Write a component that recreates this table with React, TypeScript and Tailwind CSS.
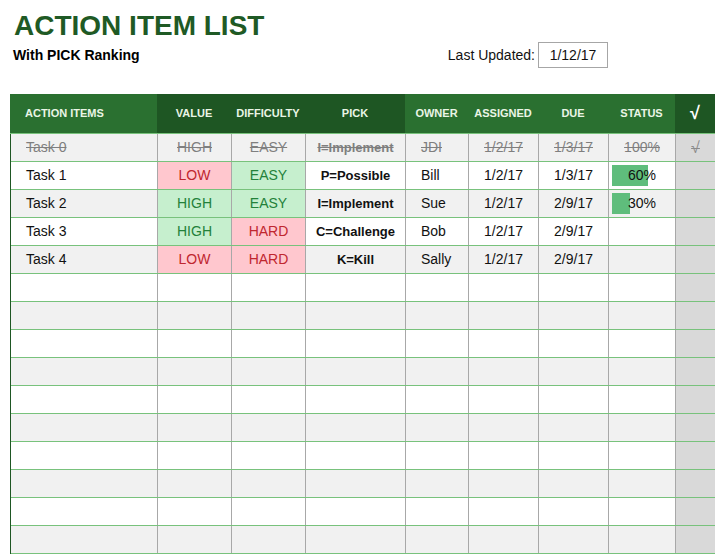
import React from 'react';

type Row = {
  task: string;
  value: string;
  diff: string;
  pick: string;
  owner: string;
  assigned: string;
  due: string;
  status?: number;
  done?: boolean;
};

const rows: Row[] = [
  { task: 'Task 0', value: 'HIGH', diff: 'EASY', pick: 'I=Implement', owner: 'JDI', assigned: '1/2/17', due: '1/3/17', status: 100, done: true },
  { task: 'Task 1', value: 'LOW', diff: 'EASY', pick: 'P=Possible', owner: 'Bill', assigned: '1/2/17', due: '1/3/17', status: 60 },
  { task: 'Task 2', value: 'HIGH', diff: 'EASY', pick: 'I=Implement', owner: 'Sue', assigned: '1/2/17', due: '2/9/17', status: 30 },
  { task: 'Task 3', value: 'HIGH', diff: 'HARD', pick: 'C=Challenge', owner: 'Bob', assigned: '1/2/17', due: '2/9/17' },
  { task: 'Task 4', value: 'LOW', diff: 'HARD', pick: 'K=Kill', owner: 'Sally', assigned: '1/2/17', due: '2/9/17' },
];

const grid = 'grid grid-cols-[147px_74px_74px_100px_63px_70px_70px_67px_1fr]';
const cell = 'h-full flex items-center border-r border-[#a8a8a8]';

// good = green fill, bad = red fill (like Excel conditional formats)
function rating(v: string, done?: boolean) {
  if (done) return 'text-[#7f7f7f] line-through';
  if (v === 'HIGH' || v === 'EASY') return 'bg-[#c6efce] text-[#23813a]';
  return 'bg-[#ffc7ce] text-[#c0262f]';
}

function DataRow({ r, i }: { r?: Row; i: number }) {
  const bg = i % 2 === 0 ? 'bg-[#f1f1f1]' : 'bg-white';
  const txt = r?.done ? 'text-[#7f7f7f] line-through' : 'text-[#111]';
  return (
    <div className={`${grid} h-[28px] border-b border-[#78c27c] ${bg} text-[14px]`}>
      <div className={`${cell} pl-[15px] ${txt}`}>{r?.task}</div>
      <div className={`${cell} justify-center ${r ? rating(r.value, r.done) : ''}`}>{r?.value}</div>
      <div className={`${cell} justify-center ${r ? rating(r.diff, r.done) : ''}`}>{r?.diff}</div>
      <div className={`${cell} justify-center font-bold text-[13px] ${txt}`}>{r?.pick}</div>
      <div className={`${cell} pl-[15px] ${txt}`}>{r?.owner}</div>
      <div className={`${cell} justify-center ${txt}`}>{r?.assigned}</div>
      <div className={`${cell} justify-center ${txt}`}>{r?.due}</div>
      <div className={`${cell} justify-center relative ${txt}`}>
        {r?.status !== undefined && !r.done && (
          <div
            className="absolute left-[3px] top-[3px] bottom-[3px] bg-[#5fbd7c]"
            style={{ width: (r.status / 100) * 60 }}
          />
        )}
        {r?.status !== undefined && <span className="relative">{r.status}%</span>}
      </div>
      <div className="h-full flex items-center justify-center bg-[#d9d9d9] text-[#8a8a8a] text-[16px]">
        {r?.done && <span className="line-through">√</span>}
      </div>
    </div>
  );
}

export default function App() {
  const all: (Row | undefined)[] = [...rows, ...Array(10).fill(undefined)];
  return (
    <div className="w-[715px] h-[555px] overflow-hidden bg-white font-['Liberation_Sans',Arial,sans-serif]">
      {/* Title block */}
      <div className="pt-[10px] pl-[14px] text-[28px] leading-[32px] font-bold text-[#1f5a25]">
        ACTION ITEM LIST
      </div>
      <div className="flex items-center h-[26px] pl-[13px]">
        <div className="text-[14px] font-bold text-black">With PICK Ranking</div>
        <div className="ml-auto mr-[107px] flex items-center">
          <span className="text-[14px] text-[#111] mr-[3px]">Last Updated:</span>
          <div className="w-[70px] h-[26px] border border-[#a6a6a6] flex items-center justify-center text-[14px] text-[#111]">
            1/12/17
          </div>
        </div>
      </div>

      {/* Table */}
      <div className="ml-[10px] mt-[26px]">
        <div className={`${grid} h-[40px] border-b border-[#78c27c] text-[11px] font-bold text-[#eaf5e6]`}>
          <div className="bg-[#2a7030] flex items-center pl-[15px]">ACTION ITEMS</div>
          <div className="bg-[#1e5623] flex items-center justify-center">VALUE</div>
          <div className="bg-[#1e5623] flex items-center justify-center">DIFFICULTY</div>
          <div className="bg-[#1e5623] flex items-center justify-center">PICK</div>
          <div className="bg-[#2a7030] flex items-center justify-center">OWNER</div>
          <div className="bg-[#2a7030] flex items-center justify-center">ASSIGNED</div>
          <div className="bg-[#2a7030] flex items-center justify-center">DUE</div>
          <div className="bg-[#2a7030] flex items-center justify-center">STATUS</div>
          <div className="bg-[#1e5623] flex items-center justify-center text-[18px] text-white">√</div>
        </div>
        <div className="border-l border-[#1e5623]">
          {all.map((r, i) => (
            <DataRow key={i} r={r} i={i} />
          ))}
        </div>
      </div>
    </div>
  );
}
